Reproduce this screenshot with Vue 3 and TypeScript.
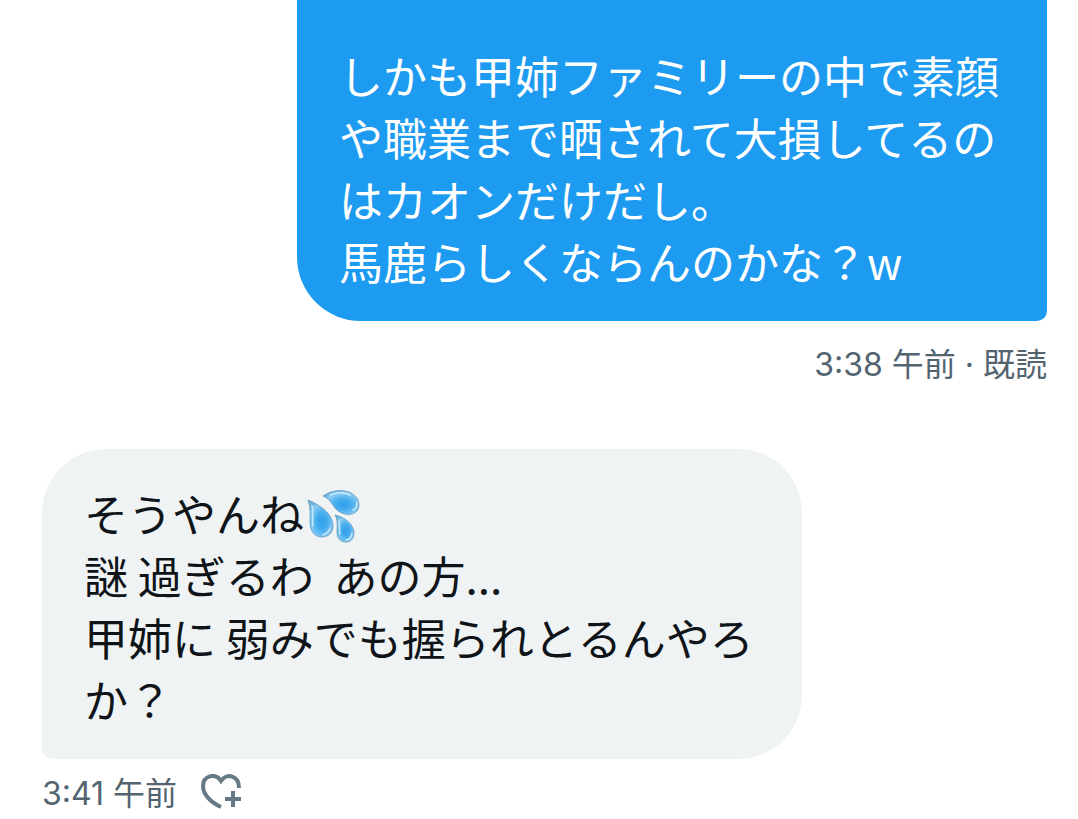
<script setup lang="ts">
import { ref } from 'vue'

const sent: string[] = [
  'しかも甲姉ファミリーの中で素顔',
  'や職業まで晒されて大損してるの',
  'はカオンだけだし。',
  '馬鹿らしくならんのかな？w',
]
const received: string[] = ['謎 過ぎるわ  あの方...', '甲姉に 弱みでも握られとるんやろ', 'か？']
const liked = ref(false)
</script>

<template>
  <main class="chat">
    <article class="message message--sent">
      <div class="bubble">
        <p v-for="line in sent" :key="line" class="line">{{ line }}</p>
      </div>
      <footer class="meta"><time>3:38 午前</time> · 既読</footer>
    </article>

    <article class="message message--received">
      <div class="bubble">
        <p class="line">
          <span>そうやんね</span>
          <svg class="drops" viewBox="0 0 54 54" role="img" aria-label="汗">
            <defs>
              <radialGradient id="drop" cx="56%" cy="58%" r="60%">
                <stop offset="0" stop-color="#2f9fe9" />
                <stop offset="0.4" stop-color="#48aeee" />
                <stop offset="0.8" stop-color="#8bcdf5" />
                <stop offset="1" stop-color="#6fb4e0" />
              </radialGradient>
            </defs>
            <g fill="url(#drop)" stroke="#5f97bb" stroke-width="0.8">
              <path d="M2 11C12 15 27 24 27 37C27 44 22 48 16 48C9 48 5 43 4 35C4 27 5 19 2 11Z" />
              <path d="M17 7C26 1 37 0 45 4C53 8 55 17 51 22C46 27 38 26 32 22C27 18 25 10 17 7Z" />
              <path d="M29 26C38 28 48 35 48 44C48 49 45 53 40 53C34 53 31 49 31 43C31 36 32 31 29 26Z" />
            </g>
            <g fill="none" stroke="#c9eafb" stroke-linecap="round" stroke-width="1.4">
              <path d="M6 17C8 25 6 32 7 37" />
              <path d="M24 6C31 3 38 3 44 6" />
              <path d="M33 31C34 36 33 41 34 45" />
              <path d="M51 13C51 17 50 20 47 21" />
              <path d="M24 39C23 43 20 45 17 46" />
              <path d="M46 44C46 48 43 51 40 51" />
            </g>
          </svg>
        </p>
        <p v-for="line in received" :key="line" class="line">{{ line }}</p>
      </div>
      <footer class="meta">
        <time>3:41 午前</time>
        <button
          class="react"
          type="button"
          aria-label="リアクションを追加"
          :aria-pressed="liked"
          @click="liked = !liked"
        >
          <svg viewBox="0 0 40 36" fill="none" stroke="currentColor" stroke-width="4">
            <path d="M20 33C9 28 2 20 2 12C2 2 14 -2 20 7C26 -2 38 2 38 14" />
            <path d="M32 17V33M24 25H40" />
          </svg>
        </button>
      </footer>
    </article>
  </main>
</template>

<style>
body {
  margin: 0;
  background: #fff;
}
</style>

<style scoped>
.chat {
  display: flex;
  flex-direction: column;
  gap: 60px;
  padding: 0 31px 0 42px;
  font-family: 'Noto Sans CJK JP', sans-serif;
}

.message {
  display: flex;
  flex-direction: column;
}

.message--sent {
  align-items: flex-end;
}

.message--received {
  align-items: flex-start;
}

.bubble {
  box-sizing: border-box;
  font-size: 44px;
  line-height: 62px;
}

.message--sent .bubble {
  padding: 44px 48px 29px 42px;
  border-radius: 0 0 10px 64px;
  background: #1d9bf0;
  color: #fff;
}

.message--received .bubble {
  padding: 33px 48px 29px 42px;
  border-radius: 64px 64px 64px 10px;
  background: #eff3f4;
  color: #0f1419;
}

.line {
  display: flex;
  align-items: center;
  margin: 0;
  white-space: pre-wrap;
}

.drops {
  width: 54px;
  height: 54px;
  margin: 6px 0 0 2px;
}

.meta {
  display: flex;
  align-items: center;
  min-height: 48px;
  color: #536471;
  font-family: Inter, 'Noto Sans CJK JP', sans-serif;
  font-size: 32px;
  line-height: 48px;
  white-space: pre;
}

.message--sent .meta {
  padding-top: 20px;
}

.message--received .meta {
  gap: 24px;
  padding-top: 11px;
}

.react {
  display: flex;
  padding: 0 0 4px;
  border: 0;
  background: none;
  color: #657985;
  cursor: pointer;
}

.react svg {
  width: 40px;
  height: 36px;
}
</style>
